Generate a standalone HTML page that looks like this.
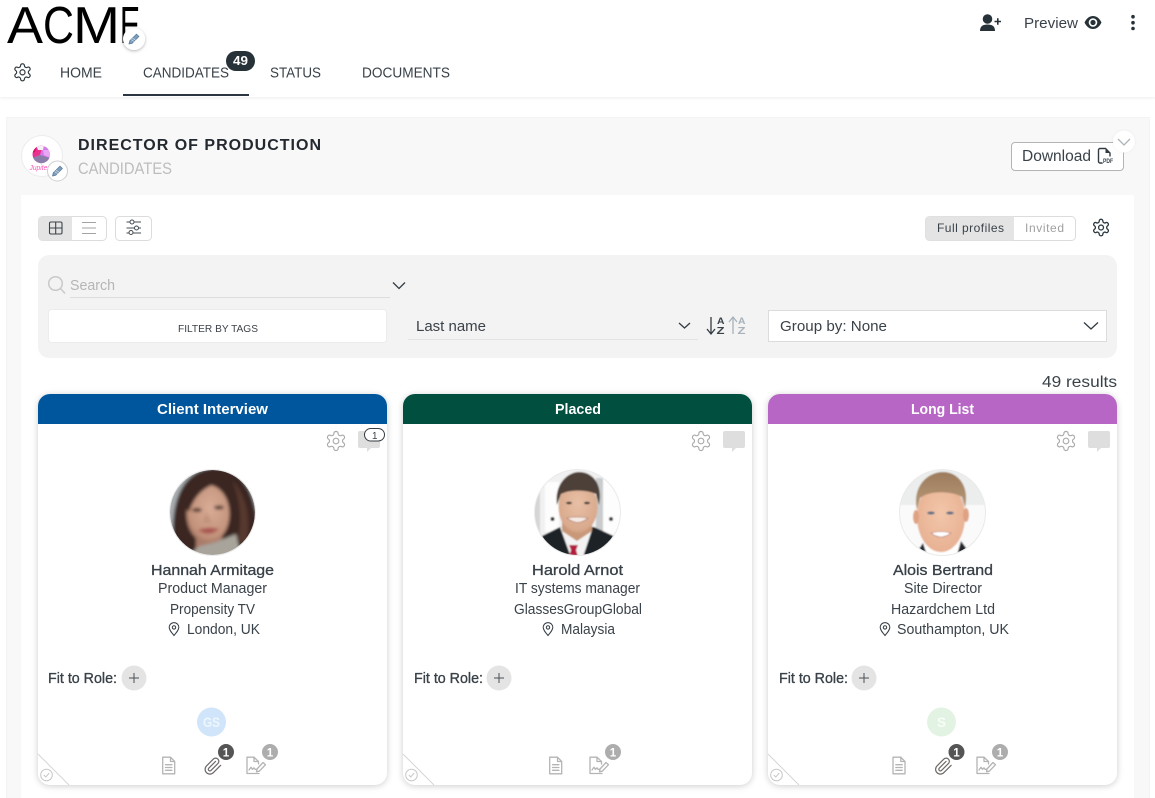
<!DOCTYPE html>
<html lang="en"><head><meta charset="utf-8"><title>Candidates</title>
<style>
html,body{margin:0;padding:0;background:#fff}
#p{position:relative;width:1155px;height:798px;overflow:hidden;background:#fff;font-family:"Liberation Sans",sans-serif}
#p>div{position:absolute;box-sizing:border-box}
.hd{left:0;top:0;width:1155px;height:97px;background:#fff;box-shadow:0 1px 3px rgba(0,0,0,.08)}
.pn{left:6px;top:117px;width:1144px;height:700px;background:#f8f8f8;border:1px solid #f3f3f3}
.in{left:21px;top:195px;width:1113px;height:620px;background:#fff}
.tb{left:38px;top:255px;width:1079px;height:103px;background:#f3f3f3;border-radius:11px}
.cd{top:394px;width:349px;height:391px;background:#fff;border-radius:12px;box-shadow:0 1px 7px rgba(0,0,0,.2);overflow:hidden}
.cd i{display:block;height:30px}
svg.o{position:absolute;left:0;top:0}
text{font-family:"Liberation Sans",sans-serif;fill:#3a4249}
.b{font-weight:700}
.s{stroke:#333b42;stroke-width:.3px}
.g{fill:none;stroke:#a9a9a9;stroke-width:1.200}
.ic{fill:none;stroke:#b4b4b4;stroke-width:1.300;stroke-linejoin:round;stroke-linecap:round}
</style></head><body>
<div id="p">
<div class="hd"></div>
<div class="pn"></div>
<div class="in"></div>
<div class="tb"></div>
<div class="cd" style="left:38px"><i style="background:#00569d"></i></div>
<div class="cd" style="left:403px"><i style="background:#004f3f"></i></div>
<div class="cd" style="left:768px"><i style="background:#b866c5"></i></div>

<svg class="o" width="1155" height="798" viewBox="0 0 1155 798" xmlns="http://www.w3.org/2000/svg">
<defs>
<filter id="bl" x="-20%" y="-20%" width="140%" height="140%"><feGaussianBlur stdDeviation="1.500"/></filter>
<filter id="bs" x="-20%" y="-20%" width="140%" height="140%"><feGaussianBlur stdDeviation=".9"/></filter>
<filter id="sh" x="-40%" y="-40%" width="180%" height="180%"><feDropShadow dx="0" dy="1" stdDeviation="1.500" flood-color="#000" flood-opacity=".3"/></filter>
<filter id="sf" x="-40%" y="-40%" width="180%" height="180%"><feDropShadow dx="0" dy="0" stdDeviation="1" flood-color="#000" flood-opacity=".08"/></filter>
<clipPath id="c1"><circle cx="212.500" cy="512.500" r="42.500"/></clipPath>
<clipPath id="c2"><circle cx="577.500" cy="512.500" r="43"/></clipPath>
<clipPath id="c3"><circle cx="942.500" cy="512.500" r="43"/></clipPath>
<clipPath id="sc"><circle cx="41.300" cy="154.500" r="8.700"/></clipPath>
<radialGradient id="sk1" cx=".55" cy=".4" r=".7"><stop offset="0" stop-color="#d8ac96"/><stop offset=".7" stop-color="#c4937c"/><stop offset="1" stop-color="#8f6353"/></radialGradient>
<radialGradient id="sk2" cx=".5" cy=".42" r=".7"><stop offset="0" stop-color="#e8c0a6"/><stop offset=".75" stop-color="#d9a98c"/><stop offset="1" stop-color="#b98468"/></radialGradient>
<radialGradient id="sk3" cx=".5" cy=".45" r=".7"><stop offset="0" stop-color="#f3c6aa"/><stop offset=".75" stop-color="#e8b294"/><stop offset="1" stop-color="#cf9274"/></radialGradient>
<linearGradient id="hr3" x1="0" y1="0" x2="0" y2="1"><stop offset="0" stop-color="#9c7b5c"/><stop offset="1" stop-color="#b89a78"/></linearGradient>
<g id="gear"><path d="M12.220 2h-.44a2 2 0 0 0-2 2v.18a2 2 0 0 1-1 1.730l-.43.25a2 2 0 0 1-2 0l-.15-.08a2 2 0 0 0-2.730.73l-.22.38a2 2 0 0 0 .73 2.730l.15.1a2 2 0 0 1 1 1.720v.51a2 2 0 0 1-1 1.740l-.15.09a2 2 0 0 0-.73 2.730l.22.38a2 2 0 0 0 2.730.73l.15-.08a2 2 0 0 1 2 0l.43.25a2 2 0 0 1 1 1.730V20a2 2 0 0 0 2 2h.44a2 2 0 0 0 2-2v-.18a2 2 0 0 1 1-1.730l.43-.25a2 2 0 0 1 2 0l.15.08a2 2 0 0 0 2.730-.73l.22-.39a2 2 0 0 0-.73-2.730l-.15-.08a2 2 0 0 1-1-1.740v-.5a2 2 0 0 1 1-1.740l.15-.09a2 2 0 0 0 .73-2.730l-.22-.38a2 2 0 0 0-2.730-.73l-.15.08a2 2 0 0 1-2 0l-.43-.25a2 2 0 0 1-1-1.730V4a2 2 0 0 0-2-2z"/><circle cx="12" cy="12" r="3"/></g>
<g id="pencil"><path d="M-5 5 L-4.200 1.800 L2.500 -4.900 L4.900 -2.500 L-1.800 4.200 Z" fill="#7f9fbe" stroke="#5e7d9c" stroke-width=".8" stroke-linejoin="round"/><path d="M-3 .6 L1 3.200M-1.800 -1 L2.200 1.600" stroke="#fff" stroke-width=".5"/></g>
<g id="doc"><path class="ic" d="M-6 -8.300 H1.800 L6 -4 V8.300 H-6 Z M1.800 -8.300 V-4 H6 M-3.200 -.8 H3.200 M-3.200 2 H3.200 M-3.200 4.800 H3.200"/></g>
<g id="clip"><g transform="translate(-9.500,-9.500) scale(.8)"><path fill="none" stroke="#6d6a68" stroke-width="1.500" stroke-linecap="round" stroke-linejoin="round" d="m21.440 11.050-9.190 9.190a6 6 0 0 1-8.490-8.490l8.570-8.570A4 4 0 1 1 18 8.840l-8.590 8.570a2 2 0 0 1-2.830-2.830l8.490-8.480"/></g></g>
<g id="sign"><path class="ic" d="M4 8 H-8 V-8.300 H-1 L3.500 -4 V-1.500 M-1 -8.300 V-4 H3.500 M-6 4.500 L-4 1.800 L-2.500 3.800 L-1 2.300 L0 3.800 H1.500"/><path class="ic" d="M2 3.500 L8 -3 L10.500 -.8 L4.300 5.700 L1.500 6.200 Z"/></g>
<g id="pin"><path d="M0 6.500 C-3 3 -4.800 .8 -4.800 -1.600 A4.800 4.800 0 0 1 4.800 -1.600 C4.800 .8 3 3 0 6.500 Z" fill="none" stroke="#333b42" stroke-width="1"/><circle cx="0" cy="-1.600" r="1.700" fill="none" stroke="#333b42" stroke-width="1"/></g>
<g id="bub"><path d="M0 2 a2 2 0 0 1 2-2 H20 a2 2 0 0 1 2 2 V15 a2 2 0 0 1-2 2 H13 L9 21 V17 H2 a2 2 0 0 1-2-2 Z" fill="#dedede"/></g>
<g id="corner"><path d="M0 -31 L31 0" stroke="#d6d6d6" stroke-width="1" fill="none"/><circle cx="8.500" cy="-10" r="5.800" fill="none" stroke="#c8c8c8" stroke-width="1"/><path d="M5.800 -10 L7.800 -8 L11.200 -12" fill="none" stroke="#c8c8c8" stroke-width="1"/></g>
<g id="plus"><circle r="12.500" fill="#e4e4e4"/><path d="M-5 0 H5 M0 -5 V5" stroke="#4a5056" stroke-width="1"/></g>
<g id="chev"><path d="M-6 -3 L0 3 L6 -3" fill="none" stroke="#333b42" stroke-width="1.300"/></g>
</defs>

<!-- logo -->
<g style="--x:0">
<text x="7" y="43" font-size="52" textLength="36" lengthAdjust="spacingAndGlyphs" style="fill:#000">A</text>
<text x="43" y="43" font-size="52" textLength="31" lengthAdjust="spacingAndGlyphs" style="fill:#000">C</text>
<text x="73" y="43" font-size="52" textLength="47" lengthAdjust="spacingAndGlyphs" style="fill:#000">M</text>
<text x="120" y="43" font-size="52" textLength="20" lengthAdjust="spacingAndGlyphs" style="fill:#000">E</text>
</g>
<circle cx="134" cy="39" r="11" fill="#fff" filter="url(#sh)"/>
<use href="#pencil" x="134" y="39"/>

<!-- nav -->
<use href="#gear" transform="translate(12.300,62.100) scale(.85)" fill="none" stroke="#2d3840" stroke-width="1.400"/>
<text x="60" y="77.700" font-size="15" textLength="42" lengthAdjust="spacingAndGlyphs">HOME</text>
<text x="143" y="77.700" font-size="15" textLength="86" lengthAdjust="spacingAndGlyphs">CANDIDATES</text>
<text x="270" y="77.700" font-size="15" textLength="51" lengthAdjust="spacingAndGlyphs">STATUS</text>
<text x="362" y="77.700" font-size="15" textLength="88" lengthAdjust="spacingAndGlyphs">DOCUMENTS</text>
<rect x="123" y="94" width="126" height="2" fill="#2b3640"/>
<rect x="226" y="51" width="29" height="20" rx="10" fill="#263238"/>
<text x="233" y="65" font-size="12.500" class="b" textLength="15" lengthAdjust="spacingAndGlyphs" style="fill:#fff">49</text>

<!-- top right -->
<circle cx="987.500" cy="19" r="4.800" fill="#263238"/>
<path d="M980 31 C980 26 983 24.500 987.500 24.500 C992 24.500 995 26 995 31 Z" fill="#263238"/>
<path d="M994.500 21.500 H1001 M997.800 18.300 V24.800" stroke="#263238" stroke-width="1.600"/>
<text x="1024" y="28" font-size="15" textLength="54" lengthAdjust="spacingAndGlyphs">Preview</text>
<path d="M1084.500 22.500 C1087 17.500 1090 16 1093 16 C1096 16 1099 17.500 1101.500 22.500 C1099 27.500 1096 29 1093 29 C1090 29 1087 27.500 1084.500 22.500 Z" fill="#263238"/>
<circle cx="1093" cy="22.500" r="4.300" fill="#fff"/><circle cx="1093" cy="22.500" r="2.600" fill="#263238"/>
<circle cx="1133" cy="16.700" r="1.800" fill="#263238"/><circle cx="1133" cy="22.700" r="1.800" fill="#263238"/><circle cx="1133" cy="28.500" r="1.800" fill="#263238"/>

<!-- panel header -->
<circle cx="42" cy="156" r="20.500" fill="#fff" stroke="#ececec"/>
<g clip-path="url(#sc)">
<rect x="32" y="145" width="19" height="19" fill="#d47ae8"/>
<path d="M32 145 H43 L40 155 L32 158 Z" fill="#ea2f8f"/>
<path d="M36 145 H44 L43 150 L38 150 Z" fill="#f4f0f4"/>
<path d="M32 158 L40 155 L50 158 V164 H32 Z" fill="#8a7ea8"/>
<path d="M32 145 H37 L35 152 L32 153 Z" fill="#d01060"/>
<path d="M43 150 H51 V158 L44 155 Z" fill="#e8a6f4"/>
</g>
<text x="29.500" y="170" font-size="7.500" font-style="italic" textLength="20" lengthAdjust="spacingAndGlyphs" style="fill:#ff55bb">Jupiter</text>
<circle cx="57.500" cy="171" r="10" fill="#fff" stroke="#cfcfcf"/>
<use href="#pencil" x="57.500" y="171"/>
<text x="78" y="150" font-size="16" class="b" textLength="243" lengthAdjust="spacing" style="fill:#23292f">DIRECTOR OF PRODUCTION</text>
<text x="78" y="174" font-size="16.500" textLength="94" lengthAdjust="spacingAndGlyphs" style="fill:#bdbdbd">CANDIDATES</text>

<rect x="1011.500" y="142.500" width="112" height="28" rx="3.500" fill="#fff" stroke="#b4b4b4"/>
<text x="1022" y="161" font-size="15.500" textLength="69" lengthAdjust="spacingAndGlyphs">Download</text>
<path d="M1103 163 H1100 a1.500 1.500 0 0 1 -1.500 -1.500 V150 a1.500 1.500 0 0 1 1.500 -1.500 H1105.500 L1110 153 V157" fill="none" stroke="#333b42" stroke-width="1.400"/>
<path d="M1105.500 148.500 V153 H1110 Z" fill="#333b42"/>
<rect x="1102.500" y="156.500" width="11" height="7" fill="#fff"/>
<text x="1103" y="163" font-size="6.500" class="b" textLength="10" lengthAdjust="spacingAndGlyphs">PDF</text>
<circle cx="1124" cy="141.500" r="11" fill="#fff" filter="url(#sf)"/>
<path d="M1118 139 L1124 145 L1130 139" fill="none" stroke="#adb4b8" stroke-width="1.300"/>

<!-- toggles -->
<rect x="38.500" y="216.500" width="68" height="24" rx="4" fill="#fff" stroke="#dcdcdc"/>
<path d="M42 216.500 H72 V240.500 H42 a3.500 3.500 0 0 1 -3.500 -3.500 V220 a3.500 3.500 0 0 1 3.500 -3.500Z" fill="#e4e4e4"/>
<rect x="49.500" y="222" width="12.500" height="12" rx="1.500" fill="none" stroke="#3a444b" stroke-width="1.100"/>
<path d="M55.700 222 V234 M49.500 228 H62" stroke="#3a444b" stroke-width="1.100"/>
<path d="M82 222.500 H96 M82 228 H96 M82 233.500 H96" stroke="#a3a3a3" stroke-width="1"/>
<rect x="115.500" y="216.500" width="36" height="24" rx="4" fill="#fff" stroke="#dcdcdc"/>
<path d="M126.500 222 H141 M126.500 228 H141 M126.500 233 H141" stroke="#444c52" stroke-width="1"/>
<circle cx="132" cy="222" r="2" fill="#fff" stroke="#444c52"/><circle cx="136.500" cy="228" r="2" fill="#fff" stroke="#444c52"/><circle cx="131" cy="232.500" r="2" fill="#fff" stroke="#444c52"/>

<rect x="925.500" y="216.500" width="150" height="24" rx="4" fill="#fff" stroke="#dcdcdc"/>
<path d="M1014 216.500 H929.500 a4 4 0 0 0 -4 4 V236.500 a4 4 0 0 0 4 4 H1014 Z" fill="#e4e4e4"/>
<text x="937" y="232" font-size="12" textLength="67" lengthAdjust="spacing">Full profiles</text>
<text x="1025" y="232" font-size="12" textLength="39" lengthAdjust="spacing" style="fill:#a0a0a0">Invited</text>
<use href="#gear" transform="translate(1091.200,217.700) scale(.82)" fill="none" stroke="#2d3840" stroke-width="1.600"/>

<!-- filter bar -->
<circle cx="55.500" cy="283.500" r="6.800" fill="none" stroke="#c9c9c9" stroke-width="1.500"/>
<path d="M60.500 288.500 L65 293.500" stroke="#c9c9c9" stroke-width="1.500"/>
<text x="70" y="290" font-size="15" textLength="45" lengthAdjust="spacingAndGlyphs" style="fill:#b5b5b5">Search</text>
<rect x="70" y="297" width="320" height="1" fill="#dcdcdc"/>
<use href="#chev" x="399" y="285.500"/>
<rect x="48.500" y="309.500" width="338" height="33" rx="3" fill="#fff" stroke="#ececec"/>
<text x="178" y="332" font-size="10.500" textLength="80" lengthAdjust="spacingAndGlyphs">FILTER BY TAGS</text>
<text x="416" y="331" font-size="15" textLength="70" lengthAdjust="spacingAndGlyphs">Last name</text>
<rect x="408" y="339" width="290" height="1" fill="#e2e2e2"/>
<path d="M679 323 L684.500 328 L690 323" fill="none" stroke="#333b42" stroke-width="1.300"/>
<path d="M711 317 V333 M707 329 L711 334 L715 329" fill="none" stroke="#333b42" stroke-width="1.300"/>
<text x="717" y="324" font-size="9.500" class="b" textLength="7.500" lengthAdjust="spacingAndGlyphs">A</text>
<text x="716.500" y="334" font-size="10" class="b" textLength="8" lengthAdjust="spacingAndGlyphs">Z</text>
<path d="M733 334 V318 M729 322 L733 317 L737 322" fill="none" stroke="#a8b2ba" stroke-width="1.300"/>
<text x="738" y="324" font-size="9.500" class="b" textLength="7.500" lengthAdjust="spacingAndGlyphs" style="fill:#a8b2ba">A</text>
<text x="737.500" y="334" font-size="10" class="b" textLength="8" lengthAdjust="spacingAndGlyphs" style="fill:#a8b2ba">Z</text>
<rect x="768.500" y="310.500" width="338" height="31" fill="#fff" stroke="#dcdcdc"/>
<text x="780" y="331" font-size="15" textLength="107" lengthAdjust="spacingAndGlyphs">Group by: None</text>
<path d="M1084 322.500 L1091 329 L1098 322.500" fill="none" stroke="#333b42" stroke-width="1.300"/>
<text x="1042" y="387" font-size="15.500" textLength="75" lengthAdjust="spacingAndGlyphs">49 results</text>

<!-- card headers -->
<text x="157" y="414" font-size="14.500" class="b" textLength="111" lengthAdjust="spacingAndGlyphs" style="fill:#fff">Client Interview</text>
<text x="555" y="414" font-size="14.500" class="b" textLength="46" lengthAdjust="spacingAndGlyphs" style="fill:#fff">Placed</text>
<text x="911" y="414" font-size="14.500" class="b" textLength="63" lengthAdjust="spacingAndGlyphs" style="fill:#fff">Long List</text>

<!-- card tools -->
<use href="#gear" transform="translate(324.600,429.600) scale(.95)" class="g"/>
<use href="#gear" transform="translate(689.600,429.600) scale(.95)" class="g"/>
<use href="#gear" transform="translate(1054.600,429.600) scale(.95)" class="g"/>
<use href="#bub" x="358" y="431"/><use href="#bub" x="723" y="431"/><use href="#bub" x="1088" y="431"/>
<rect x="364.500" y="428.500" width="20" height="12.500" rx="6.200" fill="#fff" stroke="#333b42"/>
<text x="372" y="439" font-size="10" textLength="5.500" lengthAdjust="spacingAndGlyphs">1</text>

<!-- avatar 1 -->
<g clip-path="url(#c1)"><g filter="url(#bl)">
<rect x="165" y="465" width="95" height="95" fill="#a9aeb0"/>
<path d="M176 560 C168 520 174 472 212 468 C246 466 262 500 258 560 Z" fill="#3a2521"/>
<path d="M232 480 C246 495 252 520 246 545 L238 540 C242 520 240 498 232 480 Z" fill="#57392f"/>
<path d="M196 535 H222 V552 H196 Z" fill="#a97c68"/>
<ellipse cx="208" cy="514" rx="21.500" ry="29" fill="url(#sk1)"/>
<path d="M186 508 C188 490 200 481 214 484 C204 488 194 496 189 512 Z" fill="#3a2521"/>
<ellipse cx="197" cy="510" rx="5" ry="2" fill="#50342d"/><ellipse cx="219" cy="507.500" rx="5" ry="2" fill="#50342d"/>
<path d="M206 512 L203 523 H212 Z" fill="#b98871" opacity=".6"/>
<path d="M198 530 Q209 526 219 529 Q209 538 198 530 Z" fill="#a8554f"/>
<path d="M190 560 C193 544 204 546 216 542 L236 534 L242 560 Z" fill="#a8a49c"/>
</g></g>
<!-- avatar 2 -->
<g clip-path="url(#c2)"><g filter="url(#bs)">
<rect x="530" y="465" width="95" height="95" fill="#f1f1f1"/>
<rect x="545" y="482" width="14" height="50" fill="#fdfdfd"/><rect x="603" y="476" width="18" height="60" fill="#fdfdfd"/>
<rect x="596" y="478" width="7" height="56" fill="#c9cbcd"/><rect x="534" y="478" width="6" height="60" fill="#d5d6d8"/>
<circle cx="552.500" cy="519" r="2" fill="#333"/><circle cx="611" cy="519" r="2" fill="#333"/>
<path d="M538 560 L542 536 L560 527 H594 L618 538 L622 560 Z" fill="#1d2127"/>
<path d="M560 527 L572 560 H582 L592 530 Z" fill="#f3f3f3"/>
<path d="M569 545 H578 L576 550 L579 560 H568 L571 550 Z" fill="#b31e3c"/>
<path d="M562 520 H592 V531 L577 541 L562 531 Z" fill="#c99878"/>
<ellipse cx="578" cy="507" rx="19.500" ry="26" fill="url(#sk2)"/>
<path d="M557 505 C554 484 568 472 579 472 C594 472 603 486 599 505 L596 494 C588 490 570 489 561 494 Z" fill="#4d4038"/>
<ellipse cx="569" cy="503" rx="3" ry="1.300" fill="#3c3530"/><ellipse cx="587" cy="503" rx="3" ry="1.300" fill="#3c3530"/>
<path d="M567 518 Q577 516 588 518 Q578 527 567 518 Z" fill="#f5ebe6" stroke="#a86656" stroke-width=".6"/>
</g></g>
<!-- avatar 3 -->
<g clip-path="url(#c3)"><g filter="url(#bs)">
<rect x="895" y="465" width="95" height="95" fill="#eceded"/><rect x="895" y="505" width="95" height="50" fill="#fafafa"/>
<path d="M916 556 L923 545 H960 L970 556 Z" fill="#fff"/>
<path d="M914 556 L923 543 L928 558 Z M972 556 L961 541 L956 558 Z" fill="#22262b"/>
<ellipse cx="941" cy="517" rx="24" ry="35" fill="url(#sk3)"/>
<ellipse cx="916" cy="517" rx="3" ry="7" fill="#dfa283"/><ellipse cx="966" cy="515" rx="3" ry="7" fill="#dfa283"/>
<path d="M917 510 C912 486 928 472 943 472 C958 472 970 486 965 508 L962 497 C952 491 930 490 920 498 Z" fill="url(#hr3)"/>
<ellipse cx="931" cy="513" rx="3.800" ry="1.500" fill="#5d6e86"/><ellipse cx="950" cy="513" rx="3.800" ry="1.500" fill="#5d6e86"/>
<path d="M931 533 Q941 530 951 533 Q941 541 931 533 Z" fill="#fff" stroke="#b36a58" stroke-width=".6"/>
</g></g>
<circle cx="212.500" cy="512.500" r="43" fill="none" stroke="#eaeaea"/>
<circle cx="577.500" cy="512.500" r="43" fill="none" stroke="#eaeaea"/>
<circle cx="942.500" cy="512.500" r="43" fill="none" stroke="#eaeaea"/>

<!-- card text -->
<text x="151" y="575" font-size="15" class="s" textLength="123" lengthAdjust="spacingAndGlyphs">Hannah Armitage</text>
<text x="158" y="593" font-size="14.500" textLength="109" lengthAdjust="spacingAndGlyphs">Product Manager</text>
<text x="170" y="614" font-size="14.500" textLength="85" lengthAdjust="spacingAndGlyphs">Propensity TV</text>
<use href="#pin" x="174" y="629"/>
<text x="187" y="634" font-size="14.500" textLength="73" lengthAdjust="spacingAndGlyphs">London, UK</text>

<text x="532" y="575" font-size="15" class="s" textLength="91" lengthAdjust="spacingAndGlyphs">Harold Arnot</text>
<text x="515" y="593" font-size="14.500" textLength="125" lengthAdjust="spacingAndGlyphs">IT systems manager</text>
<text x="514" y="614" font-size="14.500" textLength="128" lengthAdjust="spacingAndGlyphs">GlassesGroupGlobal</text>
<use href="#pin" x="548" y="629"/>
<text x="561" y="634" font-size="14.500" textLength="54" lengthAdjust="spacingAndGlyphs">Malaysia</text>

<text x="893" y="575" font-size="15" class="s" textLength="100" lengthAdjust="spacingAndGlyphs">Alois Bertrand</text>
<text x="904" y="593" font-size="14.500" textLength="78" lengthAdjust="spacingAndGlyphs">Site Director</text>
<text x="891" y="614" font-size="14.500" textLength="104" lengthAdjust="spacingAndGlyphs">Hazardchem Ltd</text>
<use href="#pin" x="885" y="629"/>
<text x="897" y="634" font-size="14.500" textLength="112" lengthAdjust="spacingAndGlyphs">Southampton, UK</text>

<!-- fit -->
<text x="48" y="683" font-size="14.500" class="s" textLength="69" lengthAdjust="spacingAndGlyphs">Fit to Role:</text>
<text x="414" y="683" font-size="14.500" class="s" textLength="69" lengthAdjust="spacingAndGlyphs">Fit to Role:</text>
<text x="779" y="683" font-size="14.500" class="s" textLength="69" lengthAdjust="spacingAndGlyphs">Fit to Role:</text>
<use href="#plus" x="134" y="678"/><use href="#plus" x="499" y="678"/><use href="#plus" x="864" y="678"/>

<!-- initials -->
<circle cx="211.500" cy="722" r="14.500" fill="#d0e5f9"/>
<text x="203" y="727" font-size="13.500" class="b" textLength="17" lengthAdjust="spacingAndGlyphs" style="fill:#eef6fd">GS</text>
<circle cx="941.500" cy="722" r="14.500" fill="#e3f3e3"/>
<text x="937" y="727" font-size="13.500" class="b" textLength="9" lengthAdjust="spacingAndGlyphs" style="fill:#f7fcf7">S</text>

<!-- bottom icons -->
<use href="#doc" x="168.700" y="765.500"/><use href="#clip" x="213" y="766"/><use href="#sign" x="255" y="765.500"/>
<use href="#doc" x="555.700" y="765.500"/><use href="#sign" x="598" y="765.500"/>
<use href="#doc" x="899" y="765.500"/><use href="#clip" x="943.500" y="766"/><use href="#sign" x="985" y="765.500"/>
<circle cx="226" cy="752" r="8" fill="#555"/><text x="222.700" y="756.500" font-size="12" class="b" textLength="6.500" lengthAdjust="spacingAndGlyphs" style="fill:#fff">1</text>
<circle cx="270" cy="752" r="8" fill="#adadad"/><text x="266.700" y="756.500" font-size="12" class="b" textLength="6.500" lengthAdjust="spacingAndGlyphs" style="fill:#fff">1</text>
<circle cx="613" cy="752" r="8" fill="#adadad"/><text x="609.700" y="756.500" font-size="12" class="b" textLength="6.500" lengthAdjust="spacingAndGlyphs" style="fill:#fff">1</text>
<circle cx="956.500" cy="752" r="8" fill="#555"/><text x="953.200" y="756.500" font-size="12" class="b" textLength="6.500" lengthAdjust="spacingAndGlyphs" style="fill:#fff">1</text>
<circle cx="1000" cy="752" r="8" fill="#adadad"/><text x="996.700" y="756.500" font-size="12" class="b" textLength="6.500" lengthAdjust="spacingAndGlyphs" style="fill:#fff">1</text>

<use href="#corner" x="38" y="785"/><use href="#corner" x="403" y="785"/><use href="#corner" x="768" y="785"/>
</svg>
</div>
</body></html>
